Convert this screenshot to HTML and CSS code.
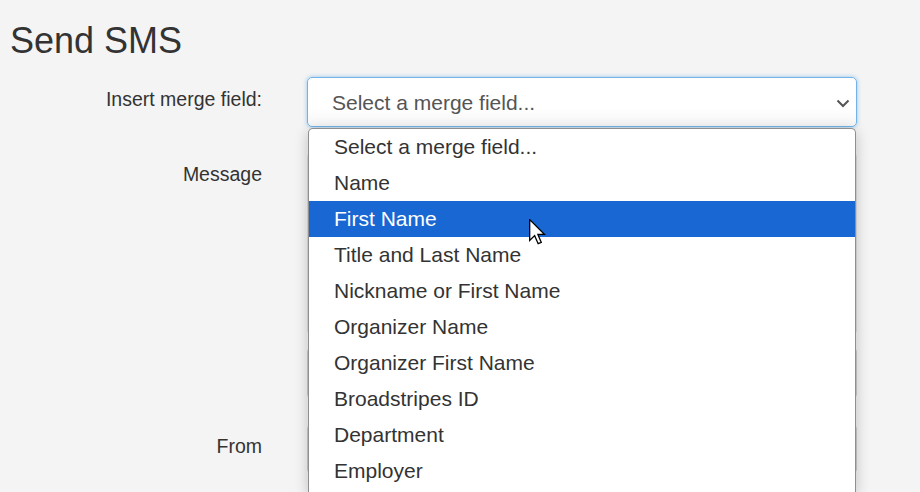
FILE: index.html
```html
<!DOCTYPE html>
<html lang="en">
<head>
<meta charset="utf-8">
<title>Send SMS</title>
<link rel="stylesheet" href="styles.css">
</head>
<body>
<main class="page">
  <h1 class="title">Send SMS</h1>
  <form class="form">
    <label class="label">Insert merge field:</label>
    <div class="control">
      <div class="select select-focus">
        <span class="select-text">Select a merge field...</span>
        <svg class="chev" width="14" height="9" viewBox="0 0 14 9"><path d="M1.5 1.5 L7 7 L12.5 1.5" fill="none" stroke="#555" stroke-width="2"/></svg>
      </div>
      <ul class="dropdown">
        <li class="opt">Select a merge field...</li>
        <li class="opt">Name</li>
        <li class="opt opt-active">First Name</li>
        <li class="opt">Title and Last Name</li>
        <li class="opt">Nickname or First Name</li>
        <li class="opt">Organizer Name</li>
        <li class="opt">Organizer First Name</li>
        <li class="opt">Broadstripes ID</li>
        <li class="opt">Department</li>
        <li class="opt">Employer</li>
      </ul>
    </div>

    <label class="label label-msg">Message</label>
    <div class="control">
      <div class="textarea"></div>
      <div class="counter"></div>
    </div>

    <label class="label">From</label>
    <div class="control">
      <div class="select"></div>
    </div>
  </form>
  <svg class="cursor" width="17" height="26" viewBox="0 0 13 20"><path d="M0.5 0.5 V16.5 L4.3 12.8 L7 19 L9.4 18 L6.8 11.9 H12 Z" fill="#fff" stroke="#000" stroke-width="1" stroke-linejoin="miter"/></svg>
</main>
</body>
</html>
```

FILE: styles.css
```css
html, body {
  margin: 0;
  padding: 0;
  height: 100%;
  overflow: hidden;
  background: #f4f4f4;
}

.page {
  position: relative;
  font-family: "Liberation Sans", Arial, sans-serif;
  color: #333;
}

.title {
  margin: 0;
  padding: 21px 0 0 10px;
  font-size: 36px;
  line-height: 40px;
  font-weight: normal;
  color: #333;
}

.form {
  margin-top: 16px;
  display: grid;
  grid-template-columns: 262px 550px;
  column-gap: 45px;
  row-gap: 25px;
  align-items: start;
}

.label {
  text-align: right;
  font-size: 19.5px;
  line-height: 24px;
  padding-top: 10px;
  color: #333;
}

.control {
  position: relative;
  display: flex;
  flex-direction: column;
  gap: 12px;
}

.select {
  box-sizing: border-box;
  height: 50px;
  border: 1px solid #ccc;
  border-radius: 5px;
  background: linear-gradient(#fff 60%, #f6f6f6);
  display: flex;
  align-items: center;
  justify-content: space-between;
  padding: 0 6px 0 24px;
}

.select-focus {
  border-color: #74b3e8;
  box-shadow: 0 0 4px rgba(102, 175, 233, 0.7);
}

.select-text {
  font-size: 21px;
  color: #555;
  padding-top: 1px;
}

.chev {
  margin-top: 2px;
}

.textarea {
  box-sizing: border-box;
  height: 183px;
  border: 1px solid #ddd;
  border-radius: 5px;
  background: #fff;
}

.counter {
  box-sizing: border-box;
  height: 52px;
  border: 1px solid #ccc;
  border-radius: 5px;
  background: #fff;
}

.dropdown {
  position: absolute;
  z-index: 5;
  left: 1px;
  top: 51px;
  width: 548px;
  height: 364px;
  box-sizing: border-box;
  margin: 0;
  padding: 0;
  list-style: none;
  background: #fff;
  border: 1px solid #8f8f8f;
  border-bottom: none;
  border-radius: 5px 5px 0 0;
  box-shadow: 0 3px 14px rgba(0, 0, 0, 0.22);
}

.opt {
  height: 36px;
  line-height: 36px;
  padding-left: 25px;
  font-size: 21px;
  color: #333;
  white-space: nowrap;
}

.opt-active {
  background: #1967d2;
  color: #fff;
}

.cursor {
  position: absolute;
  z-index: 10;
  left: 529px;
  top: 219px;
}
```
